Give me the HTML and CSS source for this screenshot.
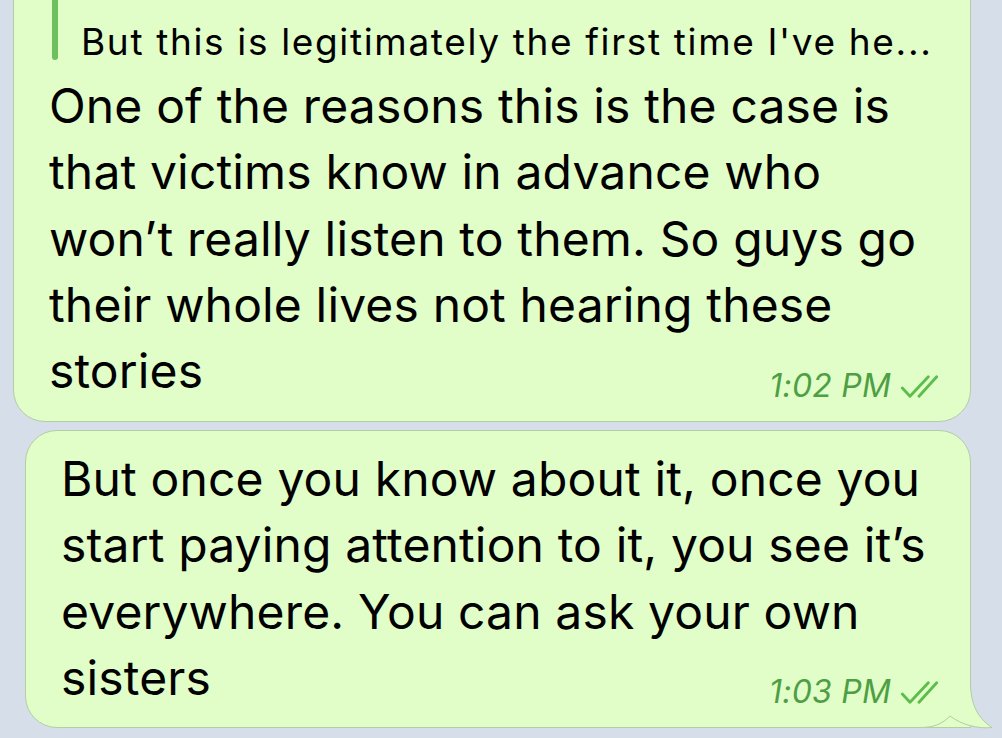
FILE: index.html
```html
<!DOCTYPE html>
<html lang="en">
<head>
    <meta charset="UTF-8">
    <meta name="viewport" content="width=device-width, initial-scale=1.0">
    <title>Chat</title>
    <link rel="stylesheet" href="styles.css">
</head>
<body>
    <div class="chat">
        <div class="bubble bubble-first">
            <div class="reply">
                <div class="reply-bar"></div>
                <div class="reply-text">But this is legitimately the first time I've he...</div>
            </div>
            <div class="message-text">One of the reasons this is the case is that victims know in advance who won’t really listen to them. So guys go their whole lives not hearing these stories</div>
            <div class="meta">
                <span class="time">1:02 PM</span>
                <svg class="checks" width="40" height="24" viewBox="0 0 40 24">
                    <path d="M2.3 14 L10 22.3 L28.3 2.7" />
                    <path d="M19 22.3 L36.7 2.7" />
                </svg>
            </div>
        </div>
        <div class="bubble bubble-last">
            <svg class="tail" width="93" height="57" viewBox="0 0 93 57">
                <path class="tail-fill" d="M0 0 H70.5 V10 C70.5 30 77 45 92 54.5 C78 56 62 52 50 43 C42 51 34 54.5 20 54.5 H0 Z" />
                <path class="tail-edge" d="M70.5 0 V10 C70.5 30 77 45 92 54.5 C78 56 62 52 50 43 C42 51 34 54.5 20 54.5 H0" />
            </svg>
            <div class="message-text">But once you know about it, once you start paying attention to it, you see it’s everywhere. You can ask your own sisters</div>
            <div class="meta">
                <span class="time">1:03 PM</span>
                <svg class="checks" width="40" height="24" viewBox="0 0 40 24">
                    <path d="M2.3 14 L10 22.3 L28.3 2.7" />
                    <path d="M19 22.3 L36.7 2.7" />
                </svg>
            </div>
        </div>
    </div>
</body>
</html>
```

FILE: styles.css
```css
body {
    margin: 0;
    height: 738px;
    overflow: hidden;
    background-color: #d6deea;
    font-family: Inter, "Liberation Sans", Arial, sans-serif;
    color: #000;
}
.chat {
    display: flex;
    flex-direction: column;
    gap: 8px;
    margin-top: -40px;
    padding-right: 31px;
}
.bubble {
    position: relative;
    background-color: #e1fdc8;
    border: 1px solid #b3cda4;
    border-radius: 32px;
    box-sizing: border-box;
}
.bubble-first {
    margin-left: 13px;
    padding: 14px 30px 16px 35px;
    height: 462px;
}
.bubble-last {
    margin-left: 25px;
    padding: 15px 30px 16px 35px;
    height: 298px;
    border-bottom-right-radius: 0;
}
.reply {
    display: flex;
    margin-bottom: 11px;
}
.reply-bar {
    width: 6px;
    margin: 0 23px 2px 3px;
    border-radius: 3px;
    background-color: #6cc15e;
}
.reply-text {
    padding-top: 46px;
    font-size: 37px;
    line-height: 41px;
    letter-spacing: 1.65px;
    white-space: nowrap;
}
.message-text {
    font-size: 48px;
    line-height: 66.3px;
    letter-spacing: 0.15px;
}
.meta {
    position: absolute;
    right: 30px;
    bottom: 16px;
    display: flex;
    align-items: center;
    gap: 9px;
}
.time {
    font-size: 32px;
    font-style: italic;
    letter-spacing: 0.2px;
    color: #4e9f43;
}
.checks path {
    fill: none;
    stroke: #5cbd4a;
    stroke-width: 2.8;
    stroke-linecap: round;
    stroke-linejoin: round;
}
.tail {
    position: absolute;
    right: -23px;
    bottom: -3px;
}
.tail-fill {
    fill: #e1fdc8;
}
.tail-edge {
    fill: none;
    stroke: #b3cda4;
    stroke-width: 1;
}
```
